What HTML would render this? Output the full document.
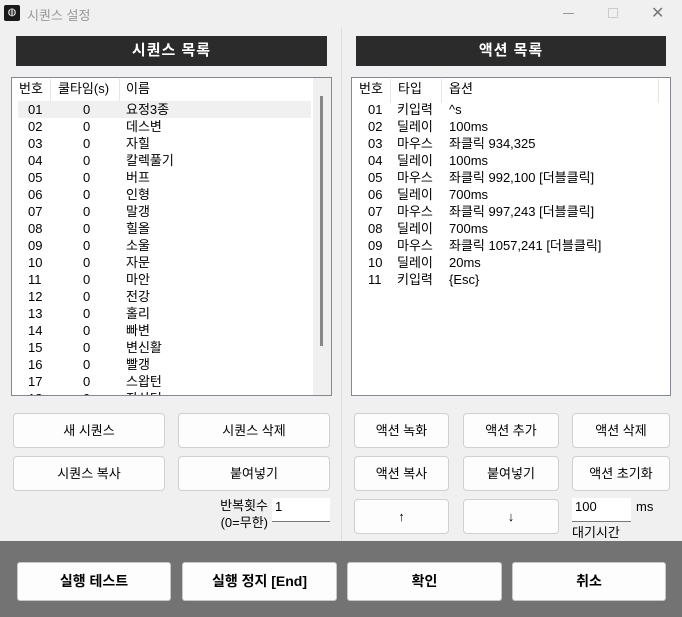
<!DOCTYPE html>
<html><head><meta charset="utf-8"><style>
*{margin:0;padding:0;box-sizing:border-box}
body{width:682px;height:617px;overflow:hidden;background:#f0f0f0;font-family:"Liberation Sans","Noto Sans CJK KR","NanumGothic",sans-serif;font-size:13px;color:#000;position:relative}
.a{position:absolute}
.hdr{background:#2b2b2b;color:#fff;font-weight:bold;font-size:15px;text-align:center;line-height:29px;letter-spacing:1px}
.list{background:#fff;border:1px solid #828790;overflow:hidden}
.row{position:absolute;height:17px;line-height:17px;white-space:nowrap}
.btn{position:absolute;background:#fdfdfd;border:1px solid #d0d0d0;border-radius:4px;text-align:center;font-size:13px}
.bb{position:absolute;background:#fdfdfd;border:1px solid #c8c8c8;border-radius:3px;text-align:center;font-weight:bold;font-size:14px;line-height:36px}
.sep{position:absolute;top:1px;width:1px;height:24px;background:#e5e5e5}
</style></head><body>
<div class="a" style="left:0;top:0;width:682px;height:27px;background:#f0f0f0"></div>
<div class="a" style="left:4px;top:5px;width:16px;height:16px;background:#1a1a1a;border-radius:2px;color:#fff;font-size:10px;text-align:center;line-height:16px">◍</div>
<div class="a" style="left:27px;top:5px;color:#999;font-size:13px">시퀀스 설정</div>
<div class="a" style="left:563px;top:13px;width:11px;height:1px;background:#999"></div>
<div class="a" style="left:608px;top:8px;width:10px;height:10px;border:1px solid #ccc"></div>
<div class="a" style="left:651px;top:3px;color:#777;font-size:16px">✕</div>

<div class="a" style="left:341px;top:28px;width:1px;height:513px;background:#dcdcdc"></div>

<div class="a hdr" style="left:16px;top:36px;width:311px;height:30px">시퀀스 목록</div>
<div class="a hdr" style="left:356px;top:36px;width:310px;height:30px">액션 목록</div>

<div class="a list" style="left:11px;top:77px;width:321px;height:319px">
 <div class="sep" style="left:38px"></div><div class="sep" style="left:107px"></div>
 <div class="a" style="left:301px;top:0;width:19px;height:317px;background:#f0f0f0"></div>
 <div class="a" style="left:308px;top:18px;width:3px;height:250px;background:#888"></div>
 <div class="a" style="left:6px;top:23px;width:293px;height:17px;background:#f0f0f0"></div>
 <div class="row" style="left:7px;top:2px">번호</div>
 <div class="row" style="left:46px;top:2px">쿨타임(s)</div>
 <div class="row" style="left:114px;top:2px">이름</div>
 <div id="L"></div>
</div>

<div class="a list" style="left:351px;top:77px;width:320px;height:319px">
 <div class="sep" style="left:38px"></div><div class="sep" style="left:89px"></div><div class="sep" style="left:306px"></div>
 <div class="row" style="left:7px;top:2px">번호</div>
 <div class="row" style="left:46px;top:2px">타입</div>
 <div class="row" style="left:97px;top:2px">옵션</div>
 <div id="R"></div>
</div>

<div class="btn" style="left:13px;top:413px;width:152px;height:35px;line-height:33px">새 시퀀스</div>
<div class="btn" style="left:178px;top:413px;width:152px;height:35px;line-height:33px">시퀀스 삭제</div>
<div class="btn" style="left:13px;top:456px;width:152px;height:35px;line-height:33px">시퀀스 복사</div>
<div class="btn" style="left:178px;top:456px;width:152px;height:35px;line-height:33px">붙여넣기</div>
<div class="a" style="left:200px;top:497px;text-align:right;width:68px;line-height:17px">반복횟수<br>(0=무한)</div>
<div class="a" style="left:272px;top:498px;width:58px;height:24px;background:#fff;border-bottom:1px solid #777;padding:1px 3px">1</div>

<div class="btn" style="left:354px;top:413px;width:95px;height:35px;line-height:33px">액션 녹화</div>
<div class="btn" style="left:463px;top:413px;width:96px;height:35px;line-height:33px">액션 추가</div>
<div class="btn" style="left:572px;top:413px;width:98px;height:35px;line-height:33px">액션 삭제</div>
<div class="btn" style="left:354px;top:456px;width:95px;height:35px;line-height:33px">액션 복사</div>
<div class="btn" style="left:463px;top:456px;width:96px;height:35px;line-height:33px">붙여넣기</div>
<div class="btn" style="left:572px;top:456px;width:98px;height:35px;line-height:33px">액션 초기화</div>
<div class="btn" style="left:354px;top:499px;width:95px;height:35px;line-height:33px">↑</div>
<div class="btn" style="left:463px;top:499px;width:96px;height:35px;line-height:33px">↓</div>
<div class="a" style="left:572px;top:498px;width:59px;height:24px;background:#fff;border-bottom:1px solid #777;padding:1px 3px">100</div>
<div class="a" style="left:636px;top:499px">ms</div>
<div class="a" style="left:572px;top:522px">대기시간</div>

<div class="a" style="left:0;top:541px;width:682px;height:76px;background:#737373"></div>
<div class="bb" style="left:17px;top:562px;width:154px;height:39px">실행 테스트</div>
<div class="bb" style="left:182px;top:562px;width:155px;height:39px">실행 정지 [End]</div>
<div class="bb" style="left:347px;top:562px;width:155px;height:39px">확인</div>
<div class="bb" style="left:512px;top:562px;width:154px;height:39px">취소</div>

<script>
var n=["요정3종","데스변","자힐","칼렉풀기","버프","인형","말갱","힐올","소울","자문","마안","전강","홀리","빠변","변신활","빨갱","스왑턴","잔상턴"];
var h="";for(var i=0;i<n.length;i++){var t=23+i*17;var id=(i<9?"0":"")+(i+1);
h+='<div class="row" style="left:16px;top:'+t+'px">'+id+'</div><div class="row" style="left:71px;top:'+t+'px">0</div><div class="row" style="left:114px;top:'+t+'px">'+n[i]+'</div>';}
document.getElementById("L").innerHTML=h;
var r=[["키입력","^s"],["딜레이","100ms"],["마우스","좌클릭 934,325"],["딜레이","100ms"],["마우스","좌클릭 992,100 [더블클릭]"],["딜레이","700ms"],["마우스","좌클릭 997,243 [더블클릭]"],["딜레이","700ms"],["마우스","좌클릭 1057,241 [더블클릭]"],["딜레이","20ms"],["키입력","{Esc}"]];
h="";for(i=0;i<r.length;i++){t=23+i*17;id=(i<9?"0":"")+(i+1);
h+='<div class="row" style="left:16px;top:'+t+'px">'+id+'</div><div class="row" style="left:45px;top:'+t+'px">'+r[i][0]+'</div><div class="row" style="left:97px;top:'+t+'px">'+r[i][1]+'</div>';}
document.getElementById("R").innerHTML=h;
</script>
</body></html>
